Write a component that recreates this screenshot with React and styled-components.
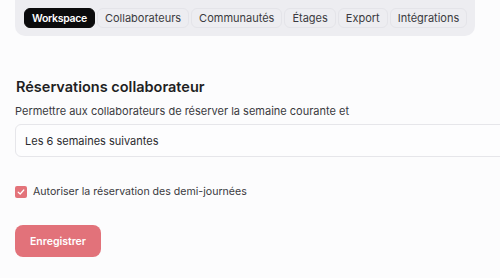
import React, { useState } from 'react';
import styled, { createGlobalStyle } from 'styled-components';

const GlobalStyle = createGlobalStyle`
  body {
    margin: 0;
    background: #fcfcfd;
    font-family: 'Inter', 'Noto Sans', sans-serif;
    color: #2a2a2e;
  }
`;

const Page = styled.div`
  padding: 0 0 0 15px;
  overflow: hidden;
`;

const TabBar = styled.nav`
  display: inline-flex;
  align-items: center;
  gap: 2px;
  padding: 8px 8px 8px 9px;
  background: #ededf1;
  border-radius: 0 0 10px 10px;
`;

const Tab = styled.button`
  height: 20px;
  padding: 0 7px;
  border-radius: 6px;
  font-family: inherit;
  font-size: ${(p) => (p.$active ? '10.5px' : '11px')};
  font-weight: ${(p) => (p.$active ? 600 : 400)};
  letter-spacing: ${(p) => (p.$active ? '-0.3px' : '0')};
  color: ${(p) => (p.$active ? '#ffffff' : '#3a3a40')};
  background: ${(p) => (p.$active ? '#0b0b0c' : 'transparent')};
  border: 1px solid ${(p) => (p.$active ? '#0b0b0c' : '#e4e4e9')};
  cursor: pointer;
`;

const Section = styled.section`
  margin-top: 41px;
  display: flex;
  flex-direction: column;
`;

const Title = styled.h2`
  margin: 0 0 7px 1px;
  font-size: 14.5px;
  font-weight: 600;
  color: #1f1f23;
  line-height: 20px;
`;

const Label = styled.label`
  font-size: 11px;
  color: #3a3a40;
  line-height: 14px;
  margin-bottom: 6px;
`;

const Select = styled.div`
  width: 520px;
  height: 33px;
  box-sizing: border-box;
  border: 1px solid #e6e6ea;
  border-radius: 6px;
  background: #fdfdfe;
  display: flex;
  align-items: center;
  padding-left: 9px;
  font-size: 11px;
  color: #2a2a2e;
`;

const CheckRow = styled.label`
  margin-top: 28px;
  display: flex;
  align-items: center;
  gap: 6px;
  font-size: 10.6px;
  color: #3a3a40;
  cursor: pointer;
`;

const Box = styled.span`
  width: 12px;
  height: 12px;
  border-radius: 2px;
  background: ${(p) => (p.$checked ? '#e3737a' : '#fff')};
  display: flex;
  align-items: center;
  justify-content: center;
`;

const SaveButton = styled.button`
  margin-top: 27px;
  align-self: flex-start;
  width: 86px;
  height: 32px;
  border: none;
  border-radius: 8px;
  background: #e2727a;
  color: #ffffff;
  font-family: inherit;
  font-size: 10.5px;
  font-weight: 600;
  cursor: pointer;
`;

const tabs = ['Workspace', 'Collaborateurs', 'Communautés', 'Étages', 'Export', 'Intégrations'];

const App = () => {
  const [active, setActive] = useState('Workspace');
  const [halfDays, setHalfDays] = useState(true);

  return (
    <Page>
      <GlobalStyle />
      <TabBar>
        {tabs.map((t) => (
          <Tab key={t} $active={t === active} onClick={() => setActive(t)}>
            {t}
          </Tab>
        ))}
      </TabBar>
      <Section>
        <Title>Réservations collaborateur</Title>
        <Label>Permettre aux collaborateurs de réserver la semaine courante et</Label>
        <Select>Les 6 semaines suivantes</Select>
        <CheckRow onClick={() => setHalfDays(!halfDays)}>
          <Box $checked={halfDays}>
            {halfDays && (
              <svg width="8" height="8" viewBox="0 0 8 8">
                <path d="M1.2 4.2 L3.2 6 L6.8 2" fill="none" stroke="#fff" strokeWidth="1.2" strokeLinecap="round" strokeLinejoin="round" />
              </svg>
            )}
          </Box>
          Autoriser la réservation des demi-journées
        </CheckRow>
        <SaveButton>Enregistrer</SaveButton>
      </Section>
    </Page>
  );
};

export default App;
